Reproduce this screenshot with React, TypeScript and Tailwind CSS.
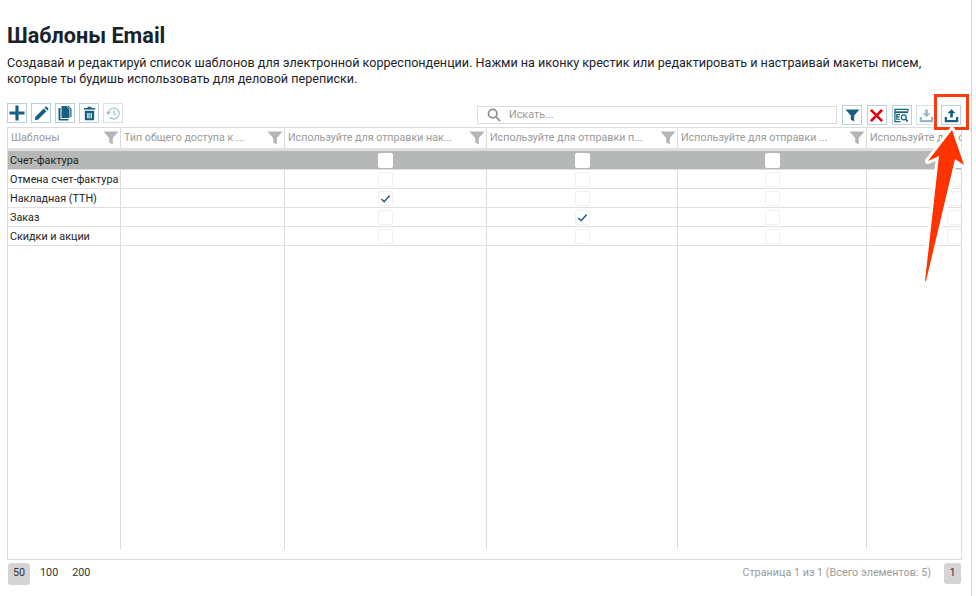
import type { ReactNode } from "react";

const columns = [
  { width: "w-[113px]", title: "Шаблоны" },
  { width: "w-[164px]", title: "Тип общего доступа к ..." },
  { width: "w-[202px]", title: "Используйте для отправки нак..." },
  { width: "w-[191px]", title: "Используйте для отправки п..." },
  { width: "w-[189px]", title: "Используйте для отправки ..." },
  { width: "w-[175px]", title: "Используйте для отправки с..." },
];

const rows = [
  { name: "Счет-фактура", checked: -1 },
  { name: "Отмена счет-фактура", checked: -1 },
  { name: "Накладная (ТТН)", checked: 2 },
  { name: "Заказ", checked: 3 },
  { name: "Скидки и акции", checked: -1 },
];

function IconBtn({ children, faded }: { children: ReactNode; faded?: boolean }) {
  return (
    <button
      className={`w-5 h-5 flex items-center justify-center border ${
        faded ? "border-[#d5e3e7] text-[#8fbccb]" : "border-[#b9d2da] text-[#17607f]"
      }`}
    >
      {children}
    </button>
  );
}

function FunnelIcon({ className }: { className: string }) {
  return (
    <svg viewBox="0 0 16 16" className={className} fill="currentColor">
      <path d="M0.5 1.5h15L9.8 8v6.5L6.2 12.5V8z" />
    </svg>
  );
}

function Check() {
  return (
    <svg viewBox="0 0 12 12" className="w-[11px] h-[11px] text-[#17607f]" fill="none" stroke="currentColor" strokeWidth="1.6">
      <path d="M1.5 6.5 4.6 9.5 10.5 2.8" />
    </svg>
  );
}

function HeaderRow() {
  return (
    <div className="flex h-[23px] border-b-[3px] border-[#dfdfdf] shrink-0">
      {columns.map((c) => (
        <div key={c.title} className={`${c.width} shrink-0 border-r border-[#dcdcdc] flex items-center justify-between pl-[3px] pr-[1px] text-[10.7px] text-[#9a9a9a]`}>
          <span className="whitespace-nowrap overflow-hidden">{c.title}</span>
          <FunnelIcon className="w-4 h-4 text-[#b5b5b5] shrink-0" />
        </div>
      ))}
    </div>
  );
}

function Row({ name, checked, selected }: { name: string; checked: number; selected: boolean }) {
  return (
    <div className={`flex h-[19px] border-b border-[#dfdfdf] shrink-0 ${selected ? "bg-[#b5b8b6]" : ""}`}>
      {columns.map((c, i) => (
        <div key={c.title} className={`${c.width} shrink-0 border-r ${selected ? "border-[#b5b8b6]" : "border-[#dcdcdc]"} flex items-center text-[10.8px] text-[#222] ${i === 0 ? "pl-[2px] pt-[2px] whitespace-nowrap" : "justify-center"}`}>
          {i === 0 && name}
          {i >= 2 && (
            <span className={`w-[15px] h-[15px] rounded-[2px] flex items-center justify-center ${selected ? "bg-white" : "border border-[#f0f0f0]"}`}>
              {checked === i && <Check />}
            </span>
          )}
        </div>
      ))}
    </div>
  );
}

export default function App() {
  return (
    <div className="w-[972px] h-[596px] border-r border-[#c8d6da] bg-white relative overflow-hidden font-['Roboto',sans-serif] pl-[7px] pr-[9px]">
      <h1 className="text-[21.6px] leading-[25px] font-bold text-[#17232b] pt-[23px] h-[48px]">Шаблоны Email</h1>
      <p className="text-[12.6px] leading-[15.5px] text-[#1c2329] mt-[7px] w-[930px]">
        Создавай и редактируй список шаблонов для электронной корреспонденции. Нажми на иконку крестик или редактировать и настраивай макеты писем, которые ты будишь использовать для деловой переписки.
      </p>

      <div className="flex items-start justify-between h-5 mt-[17px] mb-[4px]">
        <div className="flex gap-1">
          <IconBtn>
            <svg viewBox="0 0 16 16" className="w-4 h-4" fill="currentColor"><path d="M6.4 0.5h3.2v5.9h5.9v3.2H9.6v5.9H6.4V9.6H0.5V6.4h5.9z" /></svg>
          </IconBtn>
          <IconBtn>
            <svg viewBox="0 0 16 16" className="w-[15px] h-[15px]" fill="currentColor"><path d="M1.5 11.5 10.3 2.7l3 3-8.8 8.8-3.8.8zM11.2 1.8l.9-.9a1 1 0 0 1 1.4 0l1.6 1.6a1 1 0 0 1 0 1.4l-.9.9z" /></svg>
          </IconBtn>
          <IconBtn>
            <svg viewBox="0 0 16 16" className="w-4 h-4" fill="currentColor"><path d="M1.5 3h2v11h8v1.5H2.5a1 1 0 0 1-1-1zM4.5 1h5l3 3v9h-8zM10 0.8h1.5l3 3V12h-1.2V4z" /></svg>
          </IconBtn>
          <IconBtn>
            <svg viewBox="0 0 16 16" className="w-[15px] h-[15px]" fill="currentColor"><path d="M6 0.8h4V2h4v1.8H2V2h4zM3 5h10v9.2a1 1 0 0 1-1 1H4a1 1 0 0 1-1-1zm2.6 2.5v5.5h4.8V7.5z" /><path d="M7 7.5h.8v5.5H7zm1.4 0h.8v5.5h-.8z" /></svg>
          </IconBtn>
          <IconBtn faded>
            <svg viewBox="0 0 16 16" className="w-[15px] h-[15px]" fill="none" stroke="currentColor" strokeWidth="1.2"><path d="M2.5 8a5.8 5.8 0 1 1 1.6 4" /><path d="M0.8 6.2 2.5 8.4 4.6 6.6" /><path d="M8.3 4.5v3.8l2.5 1.4" /></svg>
          </IconBtn>
        </div>
        <div className="flex items-center pr-[1px] mt-[2px]">
          <div className="w-[360px] h-[18px] mr-[5px] border border-[#dcdcdc] flex items-center pl-[9px] gap-[8px] text-[10.8px] text-[#9a9a9a]">
            <svg viewBox="0 0 16 16" className="w-[14px] h-[14px] text-[#8e8e8e]" fill="none" stroke="currentColor" strokeWidth="2"><circle cx="6.5" cy="6.5" r="4.8" /><path d="M10 10l5 5" /></svg>
            <span>Искать...</span>
          </div>
          <div className="flex gap-[4.75px]">
            <IconBtn><FunnelIcon className="w-[15px] h-[15px]" /></IconBtn>
            <IconBtn>
              <svg viewBox="0 0 16 16" className="w-[15px] h-[15px] text-[#e3000f]" fill="none" stroke="currentColor" strokeWidth="3"><path d="M2 2l12 12M14 2 2 14" /></svg>
            </IconBtn>
            <IconBtn>
              <svg viewBox="0 0 16 16" className="w-[15px] h-[15px]" fill="none" stroke="currentColor" strokeWidth="1.3"><path d="M15 3.5V1.5H1v13h6" /><path d="M1 4.5h14" strokeWidth="2" /><path d="M6.4 7H3v5h3.4M3 9.5h3" /><circle cx="10.5" cy="10" r="2.6" /><path d="M12.5 12l2.2 2.4" strokeWidth="1.8" /></svg>
            </IconBtn>
            <IconBtn faded>
              <svg viewBox="0 0 16 16" className="w-[15px] h-[15px]" fill="currentColor"><path d="M6.6 1.5h2.8v4.2h2.8L8 9.9 3.8 5.7h2.8zM0.8 9.5h2.4v3.2h9.6V9.5h2.4v5.7H0.8z" /></svg>
            </IconBtn>
            <IconBtn>
              <svg viewBox="0 0 16 16" className="w-[15px] h-[15px]" fill="currentColor"><path d="M8 1.2l4.4 4.4H9.4v4.6H6.6V5.6H3.6zM0.8 9.5h2.4v3.2h9.6V9.5h2.4v5.7H0.8z" /></svg>
            </IconBtn>
          </div>
        </div>
      </div>

      <div className="h-[433px] border border-[#dcdcdc] overflow-hidden flex flex-col">
        <HeaderRow />
        {rows.map((r, i) => (
          <Row key={r.name} name={r.name} checked={r.checked} selected={i === 0} />
        ))}
        <div className="flex h-[303px] shrink-0">
          {columns.map((c) => (
            <div key={c.title} className={`${c.width} shrink-0 border-r border-[#dcdcdc]`} />
          ))}
        </div>
      </div>

      <div className="flex items-center justify-between mt-[2px] pl-[1px] pr-[1px] text-[10.8px] h-[22px]">
        <div className="flex items-center text-[#333]">
          <span className="w-[22px] h-[22px] rounded-[3px] bg-[#d4d4d4] flex items-center justify-center mt-[1px]">50</span>
          <span className="ml-[10px]">100</span>
          <span className="ml-[14px]">200</span>
        </div>
        <div className="flex items-center text-[#9a9a9a]">
          <span>Страница 1 из 1 (Всего элементов: 5)</span>
          <span className="w-[17px] h-[21px] rounded-[3px] bg-[#d4d4d4] text-[#333] flex items-center justify-center ml-[13px]">1</span>
        </div>
      </div>

      {/* annotation over the screenshot */}
      <div className="absolute left-[934px] top-[94px] w-[35px] h-[36px] border-[3px] border-[#fb3b0c]" />
      <svg className="absolute left-0 top-0 pointer-events-none" width="976" height="596" viewBox="0 0 976 596">
        <polygon
          points="925,281 939,156 928,161 952,130 964,165 955,159 926,281"
          fill="#ff3300"
          stroke="white"
          strokeWidth="6"
          paintOrder="stroke"
          strokeLinejoin="round"
        />
      </svg>
    </div>
  );
}
